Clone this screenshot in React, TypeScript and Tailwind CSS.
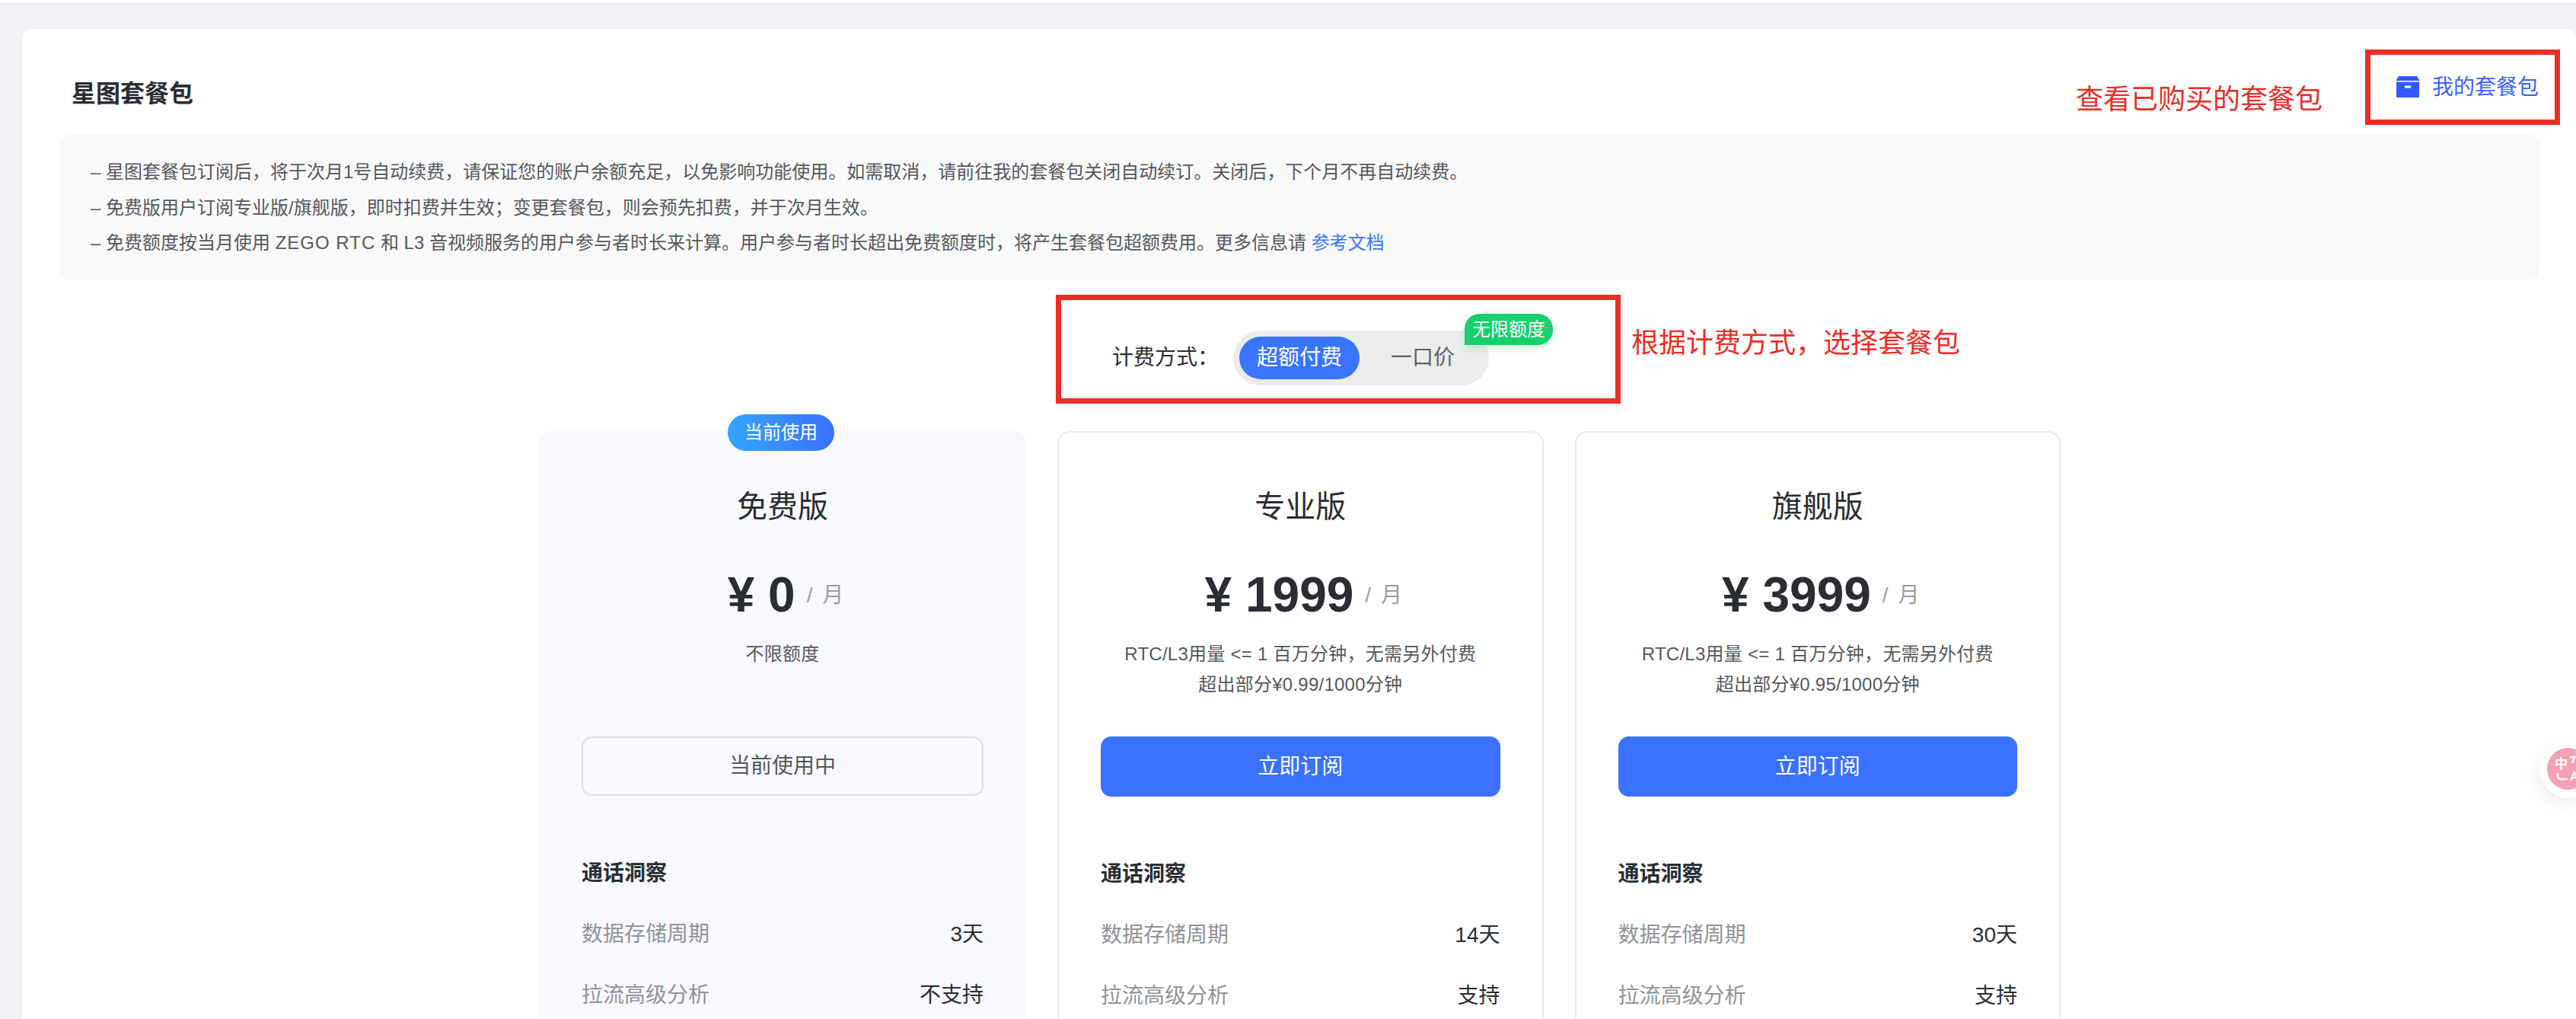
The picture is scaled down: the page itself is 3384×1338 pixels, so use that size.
const font = "[font-family:'Liberation_Sans','Noto_Sans_CJK_SC',sans-serif]";

type Plan = {
  name: string;
  price: string;
  desc: string[];
  days: string;
  advanced: string;
  current?: boolean;
};

const plans: Plan[] = [
  { name: "免费版", price: "0", desc: ["不限额度"], days: "3天", advanced: "不支持", current: true },
  {
    name: "专业版",
    price: "1999",
    desc: ["RTC/L3用量 <= 1 百万分钟，无需另外付费", "超出部分¥0.99/1000分钟"],
    days: "14天",
    advanced: "支持",
  },
  {
    name: "旗舰版",
    price: "3999",
    desc: ["RTC/L3用量 <= 1 百万分钟，无需另外付费", "超出部分¥0.95/1000分钟"],
    days: "30天",
    advanced: "支持",
  },
];

function PackageIcon() {
  return (
    <svg width="30" height="28" viewBox="0 0 30 28" className="shrink-0">
      <path d="M3 0H27L30 5V6H0V5Z" fill="#3358ff" />
      <path d="M0 7.5H30V26.5A1.5 1.5 0 0 1 28.5 28H1.5A1.5 1.5 0 0 1 0 26.5Z" fill="#3358ff" />
      <rect x="11" y="12.5" width="8" height="3" fill="#ffffff" />
    </svg>
  );
}

function PlanCard({ plan }: { plan: Plan }) {
  const box = plan.current ? "w-[640px] bg-[#f8f9fe] px-[56px]" : "w-[638.5px] bg-white border-2 border-[#e9ebec] px-[55px]";
  return (
    <div className={`relative h-[800px] shrink-0 rounded-[16px] ${box}`}>
      {plan.current && (
        <div className="absolute left-[248px] top-[-22px] w-[140px] h-[48px] rounded-full bg-gradient-to-r from-[#35a5ff] to-[#3a70ff] text-white text-[24px] flex items-center justify-center">
          当前使用
        </div>
      )}
      <div className={`text-center text-[40px] leading-[50px] text-[#2a2d33] ${plan.current ? "pt-[74px]" : "pt-[72px]"}`}>
        {plan.name}
      </div>
      <div className="mt-[60px] h-[62px] pl-[8px] flex items-center justify-center text-[#2a2d33]">
        <span className="text-[64px] leading-[62px] font-bold">¥ {plan.price}</span>
        <span className="ml-[15px] mt-[2px] text-[28px] text-[#9a9ca3] [word-spacing:5px]">/ 月</span>
      </div>
      <div className="mt-[27px] h-[128px] text-center text-[24px] leading-[40px] tracking-[0.25px] text-[#55575c]">
        {plan.desc.map((d) => (
          <div key={d}>{d}</div>
        ))}
      </div>
      {plan.current ? (
        <div className="h-[78px] rounded-[14px] border-2 border-[#dcdee2] text-[28px] text-[#55575c] flex items-center justify-center">
          当前使用中
        </div>
      ) : (
        <div className="h-[79px] rounded-[14px] bg-[#3a72ff] text-[28px] text-white flex items-center justify-center">
          立即订阅
        </div>
      )}
      <div className="mt-[82px] text-[28px] leading-[40px] font-bold text-[#2a2d33]">通话洞察</div>
      <div className="mt-[40px] flex justify-between text-[28px] leading-[40px]">
        <span className="text-[#909399]">数据存储周期</span>
        <span className="text-[#2a2d33]">{plan.days}</span>
      </div>
      <div className="mt-[40px] flex justify-between text-[28px] leading-[40px]">
        <span className="text-[#909399]">拉流高级分析</span>
        <span className="text-[#2a2d33]">{plan.advanced}</span>
      </div>
    </div>
  );
}

export default function App() {
  return (
    <div className={`relative h-[1338px] overflow-hidden bg-[#f0f2f5] ${font}`}>
      <div className="h-[4px] bg-white" />
      <div className="h-[2px] bg-[#e6e8eb]" />
      <div className="ml-[30px] mt-[32px] h-[1400px] rounded-tl-[12px] rounded-tr-[12px] bg-white pt-[27px]">
        <div className="flex items-start h-[99px] pr-[21px]">
          <div className="ml-[64px] mt-[38px] text-[32px] leading-[40px] font-bold text-[#2a2d33]">星图套餐包</div>
          <div className="ml-auto mt-[43px] text-[36px] leading-[46px] text-[#ec2d26]">查看已购买的套餐包</div>
          <div className="ml-[56px] w-[256px] h-[99px] border-[7px] border-[#ec2d26] pl-[34px] flex items-center gap-[17px] pb-[1px]">
            <PackageIcon />
            <span className="mt-[2px] text-[28px] leading-[36px] text-[#3a63ff]">我的套餐包</span>
          </div>
        </div>

        <div className="mt-[12px] ml-[48px] w-[3258px] h-[192px] rounded-[16px] bg-[#f9f9fa] pl-[41px] pt-[27px] text-[24px] leading-[46.5px] text-[#55575c]">
          <div>– 星图套餐包订阅后，将于次月1号自动续费，请保证您的账户余额充足，以免影响功能使用。如需取消，请前往我的套餐包关闭自动续订。关闭后，下个月不再自动续费。</div>
          <div>– 免费版用户订阅专业版/旗舰版，即时扣费并生效；变更套餐包，则会预先扣费，并于次月生效。</div>
          <div>
            – 免费额度按当月使用 <span className="tracking-[1px]">ZEGO RTC</span> 和 L3 音视频服务的用户参与者时长来计算。用户参与者时长超出免费额度时，将产生套餐包超额费用。更多信息请 <span className="text-[#3a75ff]">参考文档</span>
          </div>
        </div>

        <div className="mt-[19px] ml-[1357px] flex items-start">
          <div className="w-[742px] h-[143px] border-[7px] border-[#ec2d26] pl-[67px] pt-[40px] flex items-start">
            <span className="mr-[19px] text-[28px] leading-[72px] whitespace-nowrap text-[#2a2d33]">计费方式：</span>
            <div className="relative w-[336px] h-[72px] rounded-full bg-[#ebedec] p-[8px] flex items-center">
              <div className="w-[158px] h-[56px] rounded-full bg-[#3a75ff] text-white text-[28px] flex items-center justify-center">
                超额付费
              </div>
              <span className="ml-[41px] text-[28px] text-[#5f6166]">一口价</span>
              <div className="absolute left-[304px] top-[-22px] w-[116px] h-[41px] rounded-t-[20px] rounded-br-[20px] bg-[#18cf6c] text-white text-[24px] flex items-center justify-center shadow-[0_4px_10px_rgba(24,207,108,0.25)]">
                无限额度
              </div>
            </div>
          </div>
          <div className="ml-[14px] mt-[41px] text-[36px] leading-[46px] text-[#ec2d26]">根据计费方式，选择套餐包</div>
        </div>

        <div className="mt-[36px] ml-[678px] flex gap-[41px]">
          {plans.map((p) => (
            <PlanCard key={p.name} plan={p} />
          ))}
        </div>
      </div>

      <div className="absolute right-0 top-[975px] w-[48px] h-[72px] rounded-l-[36px] bg-white shadow-[0_8px_24px_rgba(0,0,0,0.08)] overflow-hidden">
        <div className="absolute left-[10px] top-[7px] w-[55px] h-[55px] rounded-full bg-[#f4a1b8] text-white">
          <span className="absolute left-[10px] top-[12px] text-[17px] leading-[20px] font-bold">中</span>
          <span className="absolute left-[30px] top-[28px] text-[16px] leading-[20px] font-bold">A</span>
          <svg width="40" height="44" viewBox="0 0 40 44" className="absolute left-0 top-0">
            <path d="M14 33V37A4 4 0 0 0 18 41H27" fill="none" stroke="#ffffff" strokeWidth="2.5" />
            <path d="M30 12H38M36 12L33 20" fill="none" stroke="#ffffff" strokeWidth="2.5" />
          </svg>
        </div>
      </div>
    </div>
  );
}
